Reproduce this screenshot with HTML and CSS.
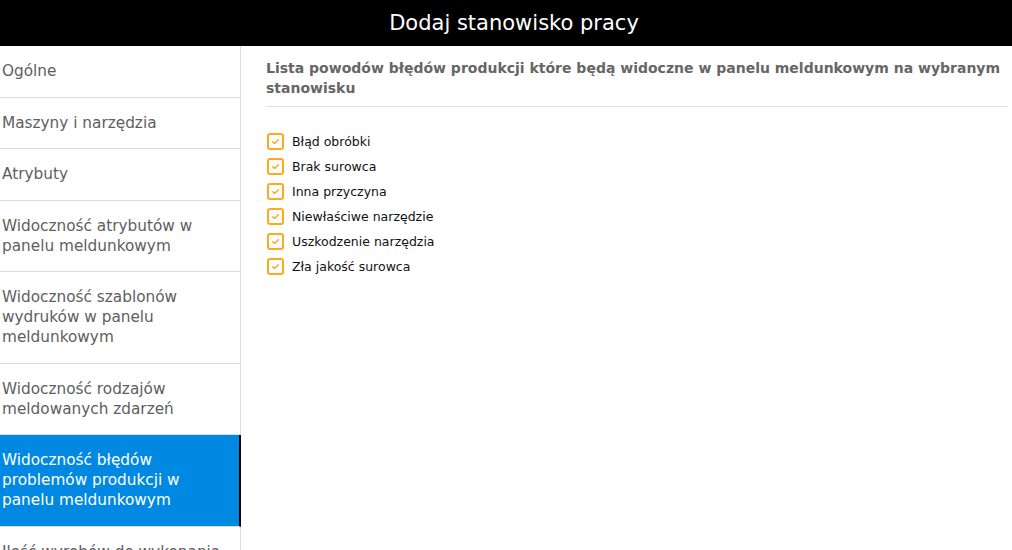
FILE: index.html
```html
<!DOCTYPE html>
<html lang="pl">
<head>
  <meta charset="UTF-8">
  <meta name="viewport" content="width=device-width, initial-scale=1">
  <title>Dodaj stanowisko pracy</title>
  <link rel="stylesheet" href="styles.css">
</head>
<body>
  <header class="topbar">Dodaj stanowisko pracy</header>

  <div class="layout">
    <nav class="sidebar">
      <a class="nav-item">Ogólne</a>
      <a class="nav-item">Maszyny i narzędzia</a>
      <a class="nav-item">Atrybuty</a>
      <a class="nav-item">Widoczność atrybutów w panelu meldunkowym</a>
      <a class="nav-item">Widoczność szablonów wydruków w panelu meldunkowym</a>
      <a class="nav-item">Widoczność rodzajów meldowanych zdarzeń</a>
      <a class="nav-item active">Widoczność błędów problemów produkcji w panelu meldunkowym</a>
      <a class="nav-item">Ilość wyrobów do wykonania w panelu</a>
    </nav>

    <main class="content">
      <h3 class="section-title">Lista powodów błędów produkcji które będą widoczne w panelu meldunkowym na wybranym stanowisku</h3>

      <ul class="check-list">
        <li><span class="check"><svg viewBox="0 0 16 16"><path d="M4.5 8.2l2.4 2.3 4.6-4.8"/></svg></span>Błąd obróbki</li>
        <li><span class="check"><svg viewBox="0 0 16 16"><path d="M4.5 8.2l2.4 2.3 4.6-4.8"/></svg></span>Brak surowca</li>
        <li><span class="check"><svg viewBox="0 0 16 16"><path d="M4.5 8.2l2.4 2.3 4.6-4.8"/></svg></span>Inna przyczyna</li>
        <li><span class="check"><svg viewBox="0 0 16 16"><path d="M4.5 8.2l2.4 2.3 4.6-4.8"/></svg></span>Niewłaściwe narzędzie</li>
        <li><span class="check"><svg viewBox="0 0 16 16"><path d="M4.5 8.2l2.4 2.3 4.6-4.8"/></svg></span>Uszkodzenie narzędzia</li>
        <li><span class="check"><svg viewBox="0 0 16 16"><path d="M4.5 8.2l2.4 2.3 4.6-4.8"/></svg></span>Zła jakość surowca</li>
      </ul>
    </main>
  </div>
</body>
</html>
```

FILE: styles.css
```css
body { margin: 0; padding: 0; background: #fff; font-family: 'DejaVu Sans', sans-serif; overflow: hidden; }
/* title sits a bit right of the window centre in the original */
.topbar { height: 46px; background: #000; color: #fff; font-size: 21px; line-height: 46px; text-align: center; padding-left: 16px; }
.layout { display: flex; height: 504px; }
.sidebar { width: 240px; flex-shrink: 0; border-right: 1px solid #dcdcdc; display: flex; flex-direction: column; }
.nav-item { display: block; flex-shrink: 0; padding: 15px 8px 15.5px 2px; font-size: 15.3px; line-height: 20px; color: #5e5e5e; border-bottom: 1px solid #dcdcdc; cursor: pointer; }
.nav-item.active { background: #0088e3; color: #fff; margin-right: -1px; border-right: 2px solid #000; }
.content { flex: 1; padding: 12px 4px 0 25px; }
.section-title { margin: 0; padding: 0 0 8px; font-size: 14px; line-height: 20px; font-weight: bold; color: #666; border-bottom: 1px solid #e2e2e2; }
.check-list { list-style: none; margin: 22px 0 0; padding: 0; }
.check-list li { display: flex; align-items: center; gap: 8px; height: 25px; font-size: 12.5px; color: #111; }
.check { width: 13px; height: 13px; margin-left: 1px; border: 2px solid #ffa91f; border-radius: 3px; display: flex; }
.check svg { width: 13px; height: 13px; fill: none; stroke: #ffa91f; stroke-width: 1.8; stroke-linecap: round; stroke-linejoin: round; }
```
